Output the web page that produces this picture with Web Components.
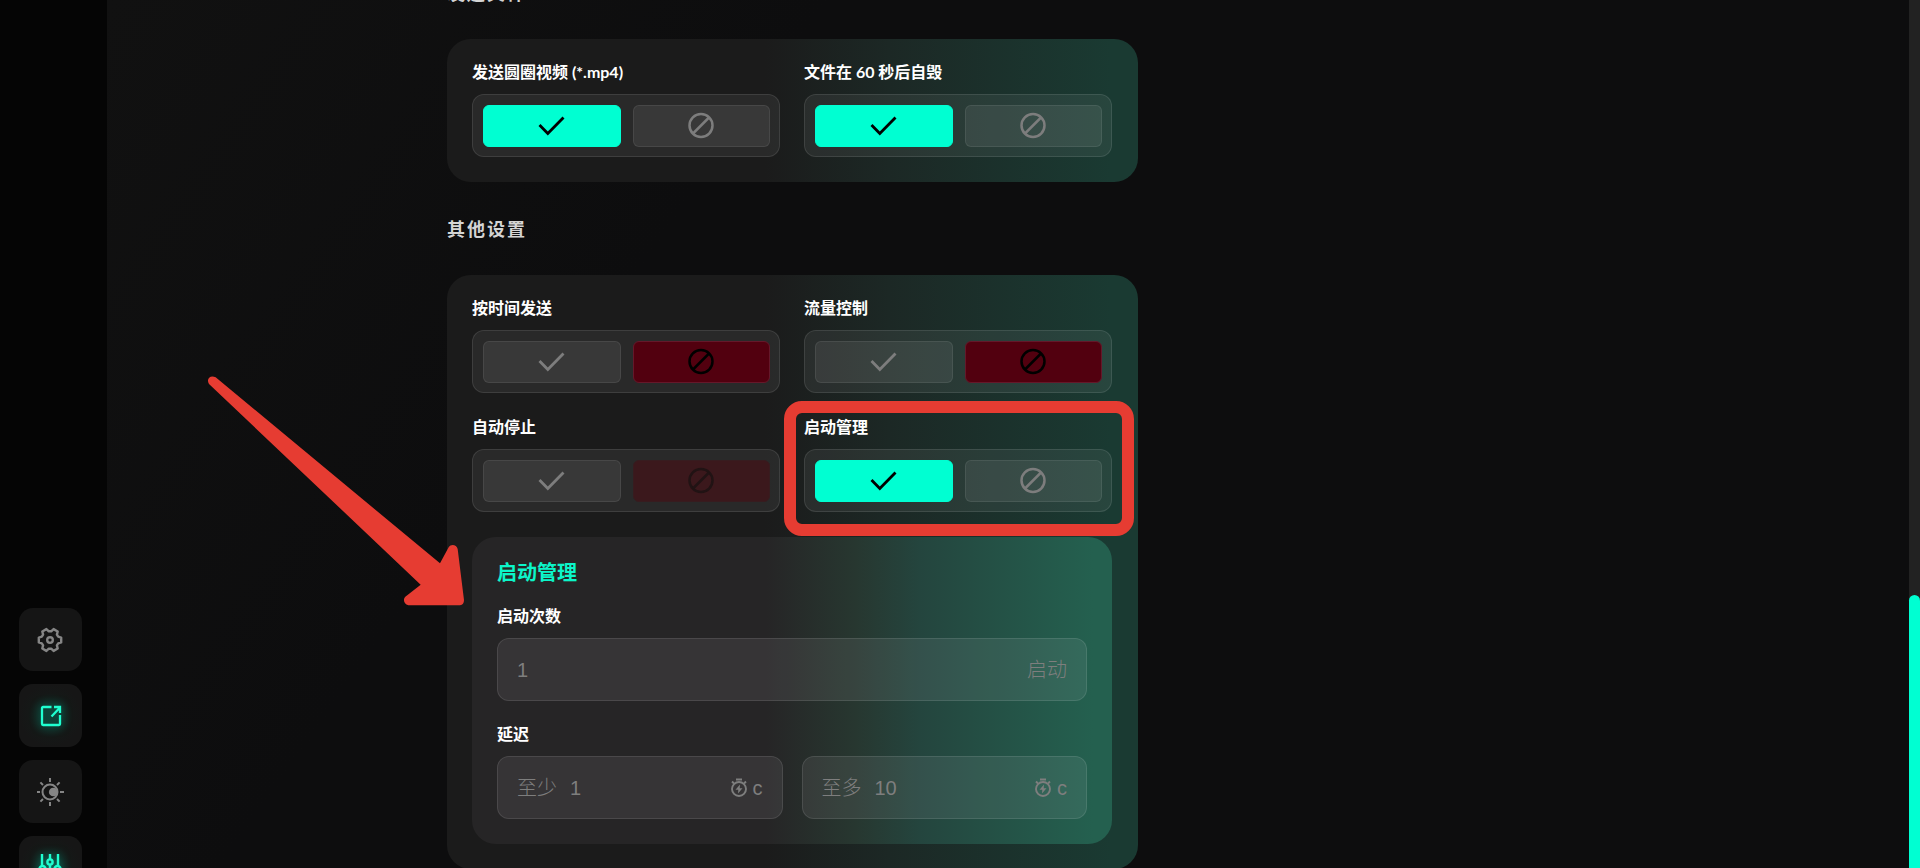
<!DOCTYPE html>
<html lang="zh-CN">
<head>
<meta charset="utf-8">
<title>其他设置</title>
<style>
html, body { height: 100%; margin: 0; }
body {
  overflow: hidden;
  background: #0d0d0e;
  color: #fff;
  font-family: Lato, "Noto Sans CJK SC", sans-serif;
  --accent: #00ffd2;
  --mark: #e63c32;
}
</style>
</head>
<body>
<app-shell>
  <side-bar slot="side">
    <side-button icon="gear" label="设置"></side-button>
    <side-button icon="share" label="打开" active></side-button>
    <side-button icon="sun" label="主题"></side-button>
    <side-button icon="sliders" label="参数" active></side-button>
  </side-bar>

  <settings-section heading="发送文件">
    <toggle-field label="发送圆圈视频 (*.mp4)" state="on"></toggle-field>
    <toggle-field label="文件在 60 秒后自毁" state="on"></toggle-field>
  </settings-section>

  <settings-section heading="其他设置">
    <toggle-field label="按时间发送" state="off"></toggle-field>
    <toggle-field label="流量控制" state="off"></toggle-field>
    <toggle-field label="自动停止" state="off" dim></toggle-field>
    <toggle-field label="启动管理" state="on" marked></toggle-field>
    <sub-panel slot="panel" heading="启动管理">
      <field-group label="启动次数">
        <number-field name="启动次数" value="1"><span slot="suffix">启动</span></number-field>
      </field-group>
      <field-group label="延迟">
        <number-field name="至少" prefix="至少" value="1"><timer-icon slot="suffix"></timer-icon><span slot="suffix">c</span></number-field>
        <number-field name="至多" prefix="至多" value="10"><timer-icon slot="suffix"></timer-icon><span slot="suffix">c</span></number-field>
      </field-group>
    </sub-panel>
    <pointer-arrow slot="note"></pointer-arrow>
  </settings-section>

  <scroll-rail slot="rail"></scroll-rail>
</app-shell>

<script>
const ICONS = {
  gear: `<svg width="28" height="28" viewBox="-13 -14 28 28" fill="none" stroke="currentColor" stroke-width="2.400" stroke-linejoin="round"><path d="M11.2-2.4V2.4L8.2 3.3 6.9 5.4 7.7 8.5 3.6 10.9 1.2 8.7H-1.2L-3.6 10.9-7.7 8.5-6.9 5.4-8.2 3.3-11.2 2.4V-2.4L-8.2-3.3-6.9-5.4-7.7-8.5-3.6-10.9-1.2-8.7H1.2L3.6-10.9 7.7-8.5 6.9-5.4 8.2-3.3Z"/><circle r="2.8"/></svg>`,
  share: `<svg width="24" height="24" viewBox="0 0 24 24" fill="none" stroke="currentColor" stroke-width="2.300"><path d="M12.500 3H4a1 1 0 0 0-1 1v16a1 1 0 0 0 1 1h16a1 1 0 0 0 1-1v-9M12.500 12.500 21 3.500M15 3h6v6"/></svg>`,
  sun: `<svg width="28" height="28" viewBox="-13 -14 28 28" fill="none" stroke="currentColor" stroke-width="2"><circle r="7.500"/><circle cx="3.200" r="4.300" fill="currentColor" stroke="none"/><path d="M0-14v4M0 14v-4M-14 0h4M14 0h-4M-9.600-9.600-7-7M9.600-9.600 7-7M-9.600 9.600-7 7M9.600 9.600 7 7"/></svg>`,
  sliders: `<svg width="28" height="28" viewBox="-13 -14 28 28" fill="none" stroke="currentColor" stroke-width="2.400"><path d="M-8-14V-3M8-14V-3M0-14V-9M0-3V13M-8 4V13M8 4V13"/><circle cy="-6" r="2.600"/><circle cx="-7.500" cy="1" r="3"/><circle cx="7.500" cy="1" r="3"/></svg>`,
  check: `<svg width="28" height="28" viewBox="0 0 28 28" fill="none" stroke="currentColor" stroke-width="2.800"><path d="M1.500 13 9.800 21.500 25.500 5.500"/></svg>`,
  ban: `<svg width="28" height="28" viewBox="0 0 28 28" fill="none" stroke="currentColor" stroke-width="2.500"><circle cx="14" cy="13.500" r="11.500"/><path d="M6 21.500 22 5.500"/></svg>`,
  timer: `<svg width="18" height="20" viewBox="0 0 18 20" fill="none" stroke="currentColor" stroke-width="1.900"><circle cx="9" cy="11" r="7"/><path d="M6 1.500h6M2 3.500l2 2M16 3.500l-2 2"/><path d="M10 6.500 5.500 11.800H8.300L8 15.500l4.500-5.300H9.700Z" fill="currentColor" stroke="none"/></svg>`
};

function define(name, render) {
  customElements.define(name, class extends HTMLElement {
    connectedCallback() {
      if (this.shadowRoot) return;
      const root = this.attachShadow({ mode: "open" });
      const t = document.createElement("template");
      t.innerHTML = render(this);
      root.append(t.content.cloneNode(true));
    }
  });
}

define("app-shell", () => `
<style>
:host { display: grid; grid-template-columns: 107px 1fr 11px; height: 100vh; overflow: hidden; }
main { overflow: hidden; padding-left: 340px; background: linear-gradient(125deg, #111111, #0d0d0e 30%); }
.column { max-width: 691px; margin-top: -19px; }
</style>
<slot name="side"></slot>
<main><div class="column"><slot></slot></div></main>
<slot name="rail"></slot>`);

define("side-bar", () => `
<style>
:host { display: block; min-height: 0; background: #050505; }
nav { display: flex; flex-direction: column; justify-content: flex-end; gap: 13px; height: 100%; box-sizing: border-box; padding-left: 19px; }
nav::after { content: ""; margin-bottom: -44px; }
</style>
<nav><slot></slot></nav>`);

define("side-button", el => `
<style>
:host { display: block; flex: none; }
button { display: grid; place-items: center; width: 63px; height: 63px; padding: 0; border: 0; border-radius: 14px; background: #151515; color: #858585; }
:host([active]) button { color: #1fffd0; background: radial-gradient(circle, #0d3129, #151817 50%, #161616 70%); }
:host([active]) svg { filter: drop-shadow(0 0 5px #00ffd280); }
</style>
<button type="button" aria-label="${el.getAttribute("label")}">${ICONS[el.getAttribute("icon")]}</button>`);

define("settings-section", el => `
<style>
:host { display: block; }
h2 { margin: 0 0 34px; font-size: 18px; line-height: 24px; font-weight: 700; letter-spacing: 2px; color: #d4d4d4; }
.card { position: relative; margin-bottom: 35px; padding: 23px 26px 25px 25px; border-radius: 24px; background: linear-gradient(90deg, #1b1b1b 46%, #1c2825 64%, #1a3a32 96%); }
.grid { display: grid; grid-template-columns: 1fr 1fr; gap: 24px; }
</style>
<h2>${el.getAttribute("heading")}</h2>
<div class="card"><div class="grid"><slot></slot></div><slot name="panel"></slot><slot name="note"></slot></div>`);

define("toggle-field", el => {
  const on = el.getAttribute("state") === "on";
  const dim = el.hasAttribute("dim") ? "disabled" : "";
  return `
<style>
:host { display: block; position: relative; }
.label { font-size: 16px; line-height: 20px; font-weight: 700; margin-bottom: 12px; white-space: nowrap; }
.box { display: grid; grid-template-columns: 1fr 1fr; gap: 12px; padding: 10px 9px 9px 10px; border: 1px solid #ffffff1a; border-radius: 12px; background: #ffffff10; }
button { display: grid; place-items: center; height: 42px; box-sizing: border-box; padding: 0; border: 1px solid #ffffff14; border-radius: 6px; background: #ffffff12; color: #7d7d7d; }
.yes[aria-pressed=true] { background: var(--accent); border-color: var(--accent); color: #000; }
.no[aria-pressed=true] { background: #52000f; border-color: #65182a; color: #000; }
.no[disabled] { background: #3b181c; border-color: #371c1f; color: #211314; }
:host([marked])::after { content: ""; position: absolute; inset: -16px -22px -24px -20px; border: 12px solid var(--mark); border-radius: 18px; pointer-events: none; z-index: 2; }
</style>
<div class="label" id="l">${el.getAttribute("label")}</div>
<div class="box" role="group" aria-labelledby="l">
<button class="yes" type="button" aria-label="开" aria-pressed="${on}" ${dim}>${ICONS.check}</button>
<button class="no" type="button" aria-label="关" aria-pressed="${!on}" ${dim}>${ICONS.ban}</button>
</div>`;
});

define("sub-panel", el => `
<style>
:host { display: block; margin-top: 25px; padding: 23px 25px 25px; border-radius: 24px; background: linear-gradient(90deg, #262526 46%, #273730 60%, #24453e 70%, #24604f 97%); }
h3 { margin: 0 0 22px; font-size: 20px; line-height: 24px; font-weight: 700; color: #0cf5c9; }
.groups { display: grid; gap: 23px; }
</style>
<h3>${el.getAttribute("heading")}</h3>
<div class="groups"><slot></slot></div>`);

define("field-group", el => `
<style>
:host { display: block; }
.label { font-size: 16px; line-height: 20px; font-weight: 700; margin-bottom: 12px; }
.row { display: grid; grid-auto-flow: column; grid-auto-columns: 1fr; gap: 19px; }
</style>
<div class="label" id="l">${el.getAttribute("label")}</div>
<div class="row" role="group" aria-labelledby="l"><slot></slot></div>`);

define("number-field", el => `
<style>
:host { display: block; min-width: 0; }
label { display: flex; align-items: center; gap: 13px; height: 61px; padding: 0 19px; border: 1px solid #ffffff1a; border-radius: 12px; background: #fff8ff13; color: #7e7e7e; font: 300 20px/24px "Liberation Sans", "Noto Sans CJK SC", sans-serif; }
input { flex: 1; min-width: 0; padding: 0; border: 0; outline: 0; background: none; font: inherit; color: inherit; }
input::placeholder { color: #7e7e7e; opacity: 1; }
.suffix { display: flex; align-items: center; gap: 5px; }
</style>
<label>${el.getAttribute("prefix") ? `<span>${el.getAttribute("prefix")}</span>` : ""}<input type="text" inputmode="numeric" aria-label="${el.getAttribute("name")}" placeholder="${el.getAttribute("value")}"><span class="suffix"><slot name="suffix"></slot></span></label>`);

define("timer-icon", () => `<style>:host { display: block; height: 20px; }</style>${ICONS.timer}`);

define("pointer-arrow", () => `
<style>
:host { position: absolute; left: -242px; top: 100px; z-index: 3; pointer-events: none; }
svg { display: block; }
path { fill: var(--mark); }
</style>
<svg width="270" height="240" viewBox="45 75 810 720" aria-hidden="true"><path d="M57 102C48 88 60 74 77 82L750 640 776 592C783 580 800 584 803 597L822 750Q822 765 810 766H655C642 762 638 748 646 740L692 704Z"/></svg>`);

define("scroll-rail", () => `
<style>
:host { display: grid; grid-template-rows: 595fr 273fr; background: #222; }
.thumb { grid-row: 2; background: var(--accent); border-radius: 6px 6px 0 0; }
</style>
<div class="thumb"></div>`);
</script>
</body>
</html>
